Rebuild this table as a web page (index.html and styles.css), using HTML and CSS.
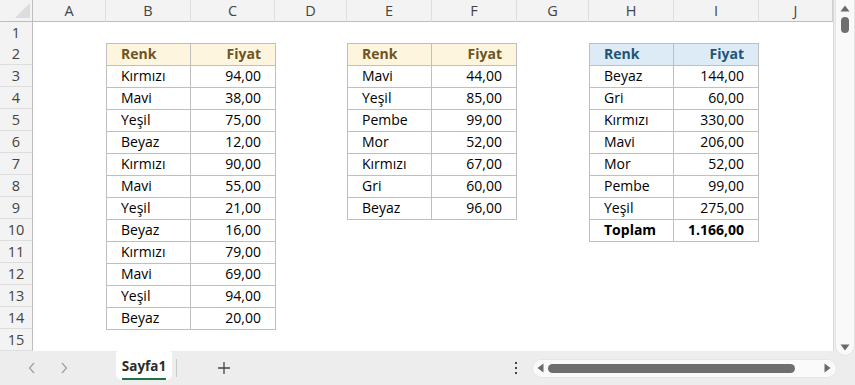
FILE: index.html
```html
<!DOCTYPE html>
<html lang="tr">
<head>
<meta charset="utf-8">
<title>Sayfa1</title>
<link rel="stylesheet" href="styles.css">
</head>
<body>
<div class="app">
  <div class="main">
    <div class="sheet">
      <div class="corner"><span class="tri"></span></div>
      <div class="ch">A</div><div class="ch">B</div><div class="ch">C</div><div class="ch">D</div><div class="ch">E</div>
      <div class="ch">F</div><div class="ch">G</div><div class="ch">H</div><div class="ch">I</div><div class="ch last">J</div>
      <div class="rh r1">1</div><div class="rh">2</div><div class="rh">3</div><div class="rh">4</div><div class="rh">5</div>
      <div class="rh">6</div><div class="rh">7</div><div class="rh">8</div><div class="rh">9</div><div class="rh">10</div>
      <div class="rh">11</div><div class="rh">12</div><div class="rh">13</div><div class="rh">14</div><div class="rh">15</div>

      <table class="tbl t1 gold">
        <colgroup><col class="c1"><col></colgroup>
        <thead><tr><th class="l">Renk</th><th class="r">Fiyat</th></tr></thead>
        <tbody>
          <tr><td class="l">Kırmızı</td><td class="r">94,00</td></tr>
          <tr><td class="l">Mavi</td><td class="r">38,00</td></tr>
          <tr><td class="l">Yeşil</td><td class="r">75,00</td></tr>
          <tr><td class="l">Beyaz</td><td class="r">12,00</td></tr>
          <tr><td class="l">Kırmızı</td><td class="r">90,00</td></tr>
          <tr><td class="l">Mavi</td><td class="r">55,00</td></tr>
          <tr><td class="l">Yeşil</td><td class="r">21,00</td></tr>
          <tr><td class="l">Beyaz</td><td class="r">16,00</td></tr>
          <tr><td class="l">Kırmızı</td><td class="r">79,00</td></tr>
          <tr><td class="l">Mavi</td><td class="r">69,00</td></tr>
          <tr><td class="l">Yeşil</td><td class="r">94,00</td></tr>
          <tr><td class="l">Beyaz</td><td class="r">20,00</td></tr>
        </tbody>
      </table>

      <table class="tbl t2 gold">
        <colgroup><col class="c1"><col></colgroup>
        <thead><tr><th class="l">Renk</th><th class="r">Fiyat</th></tr></thead>
        <tbody>
          <tr><td class="l">Mavi</td><td class="r">44,00</td></tr>
          <tr><td class="l">Yeşil</td><td class="r">85,00</td></tr>
          <tr><td class="l">Pembe</td><td class="r">99,00</td></tr>
          <tr><td class="l">Mor</td><td class="r">52,00</td></tr>
          <tr><td class="l">Kırmızı</td><td class="r">67,00</td></tr>
          <tr><td class="l">Gri</td><td class="r">60,00</td></tr>
          <tr><td class="l">Beyaz</td><td class="r">96,00</td></tr>
        </tbody>
      </table>

      <table class="tbl t3 blue">
        <colgroup><col class="c1"><col></colgroup>
        <thead><tr><th class="l">Renk</th><th class="r">Fiyat</th></tr></thead>
        <tbody>
          <tr><td class="l">Beyaz</td><td class="r">144,00</td></tr>
          <tr><td class="l">Gri</td><td class="r">60,00</td></tr>
          <tr><td class="l">Kırmızı</td><td class="r">330,00</td></tr>
          <tr><td class="l">Mavi</td><td class="r">206,00</td></tr>
          <tr><td class="l">Mor</td><td class="r">52,00</td></tr>
          <tr><td class="l">Pembe</td><td class="r">99,00</td></tr>
          <tr><td class="l">Yeşil</td><td class="r">275,00</td></tr>
          <tr class="total"><td class="l">Toplam</td><td class="r">1.166,00</td></tr>
        </tbody>
      </table>
    </div>
    <div class="vscroll">
      <div class="vtrack">
        <svg class="varrow" width="10" height="7" viewBox="0 0 10 7"><path d="M5 0.5 L9.5 6.5 L0.5 6.5 Z" fill="#6a6a6a"/></svg>
        <div class="vthumb"></div>
        <div class="grow"></div>
        <svg class="varrow" width="10" height="7" viewBox="0 0 10 7"><path d="M0.5 0.5 L9.5 0.5 L5 6.5 Z" fill="#6a6a6a"/></svg>
      </div>
    </div>
  </div>
  <div class="bar">
    <div class="nav">
      <svg class="chev" width="8" height="12" viewBox="0 0 8 12"><path d="M6 1 L1.5 6 L6 11" fill="none" stroke="#9e9e9e" stroke-width="1.2"/></svg>
      <svg class="chev" width="8" height="12" viewBox="0 0 8 12"><path d="M2 1 L6.5 6 L2 11" fill="none" stroke="#9e9e9e" stroke-width="1.2"/></svg>
    </div>
    <div class="tab"><span class="tabname">Sayfa1</span></div>
    <div class="rest">
      <div class="divider"></div>
      <svg class="plus" width="14" height="14" viewBox="0 0 14 14"><path d="M7 1 V13 M1 7 H13" stroke="#444" stroke-width="1.3"/></svg>
      <div class="grow"></div>
      <div class="dots"><i></i><i></i><i></i></div>
      <div class="hscroll">
        <svg width="7" height="10" viewBox="0 0 7 10"><path d="M6.5 0.5 L6.5 9.5 L0.5 5 Z" fill="#6a6a6a"/></svg>
        <div class="hthumb"></div>
        <div class="grow"></div>
        <svg width="7" height="10" viewBox="0 0 7 10"><path d="M0.5 0.5 L6.5 5 L0.5 9.5 Z" fill="#6a6a6a"/></svg>
      </div>
    </div>
  </div>
</div>
</body>
</html>
```
FILE: styles.css
```css
* { box-sizing: border-box; }
html, body { margin: 0; padding: 0; }
body {
  width: 855px;
  height: 385px;
  overflow: hidden;
  background: #ffffff;
  font-family: "Open Sans", "Noto Sans", "Liberation Sans", sans-serif;
  color: #000;
}
.app { display: flex; flex-direction: column; width: 855px; height: 385px; }
.main { display: flex; height: 351px; }

.sheet {
  display: grid;
  grid-template-columns: 33px 73px 85px 84px 72px 85px 85px 72px 85px 85px 74px;
  grid-template-rows: 22px 21px repeat(14, 22px);
  width: 834px;
  border-right: 1px solid #d6d6d6;
  background: #fff;
}
.corner {
  background: #f3f3f3;
  border-right: 1px solid #bdbdbd;
  border-bottom: 1px solid #bdbdbd;
  position: relative;
}
.tri {
  position: absolute;
  right: 2px;
  bottom: 3px;
  width: 0; height: 0;
  border-left: 15px solid transparent;
  border-bottom: 15px solid #dcdcdc;
}
.ch {
  background: #f3f3f3;
  border-right: 1px solid #dedede;
  border-bottom: 1px solid #bdbdbd;
  color: #444;
  font-size: 14.5px;
  display: flex; align-items: center; justify-content: center;
  padding-bottom: 1px;
}
.ch.last { border-right: 1px solid #d0d0d0; }
.rh {
  grid-column: 1;
  background: #f3f3f3;
  border-right: 1px solid #bdbdbd;
  border-bottom: 1px solid #dedede;
  color: #444;
  font-size: 14.5px;
  display: flex; align-items: center; justify-content: center;
}
.rh.r1 { border-bottom: none; }

.tbl {
  border-collapse: separate;
  border-spacing: 0;
  table-layout: fixed;
  width: 170px;
  align-self: start;
  border-top: 1px solid #bfbfbf;
  border-left: 1px solid #bfbfbf;
  font-size: 14px;
}
.t1 { grid-column: 3 / 5; grid-row: 3 / 16; }
.t2 { grid-column: 6 / 8; grid-row: 3 / 11; }
.t3 { grid-column: 9 / 11; grid-row: 3 / 12; }
.c1 { width: 84px; }
.tbl th, .tbl td {
  height: 22px;
  padding: 0 14px 1px 14px;
  border-right: 1px solid #bfbfbf;
  border-bottom: 1px solid #bfbfbf;
  line-height: 20px;
  white-space: nowrap;
  font-weight: normal;
}
.tbl th { font-weight: 700; }
.l { text-align: left; }
.r { text-align: right; }
.gold th { background: #fdf5de; color: #6e5423; }
.blue th { background: #ddebf7; color: #215476; }
.total td { font-weight: 700; }

.vscroll {
  width: 21px;
  background: #efefef;
  padding: 0 1px 0 2px;
}
.vtrack {
  height: 355px;
  background: #f9f9f9;
  box-shadow: 0 0 0 1px #e4e4e4;
  border-radius: 0 0 9px 9px;
  display: flex;
  flex-direction: column;
  align-items: center;
  padding: 5px 0 4px;
  position: relative;
  z-index: 1;
}
.vthumb {
  width: 8px;
  height: 16px;
  border-radius: 4px;
  background: #6e6e6e;
  margin-top: 5px;
}
.grow { flex: 1; }

.bar {
  display: flex;
  height: 34px;
  background: #ededed;
}
.nav {
  width: 116px;
  display: flex;
  align-items: center;
  padding-left: 28px;
  gap: 24px;
}
.tab {
  width: 56px;
  height: 29px;
  background: #fff;
  border-radius: 3px 3px 6px 6px;
  display: flex;
  align-items: center;
  justify-content: center;
}
.tabname {
  font-size: 13.5px;
  font-weight: 700;
  color: #2b2b2b;
  border-bottom: 2px solid #1e7145;
  line-height: 18px;
  padding: 2px 0 3px;
  margin-top: 3px;
}
.rest {
  flex: 1;
  display: flex;
  align-items: center;
}
.divider {
  width: 1px;
  height: 18px;
  background: #c8c8c8;
  margin-left: 4px;
}
.plus { margin-left: 40px; }
.dots {
  display: flex;
  flex-direction: column;
  gap: 3px;
  width: 3px;
}
.dots i {
  display: block;
  width: 2px;
  height: 2px;
  background: #444;
}
.hscroll {
  width: 303px;
  height: 17px;
  margin-left: 15px;
  margin-right: 19px;
  background: #fafafa;
  border-radius: 9px;
  box-shadow: 0 0 0 1px #e6e6e6;
  display: flex;
  align-items: center;
  padding: 0 5px 0 4px;
}
.hthumb {
  width: 247px;
  height: 9px;
  margin-left: 4px;
  border-radius: 5px;
  background: #6e6e6e;
}
```
